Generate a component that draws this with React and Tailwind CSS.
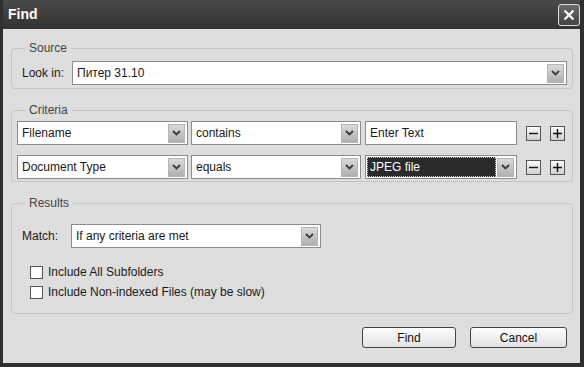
import React from "react";

function Arrow() {
  return (
    <div className="flex items-center justify-center w-[17px] h-[19px] border border-[#b4b4b4] bg-gradient-to-b from-[#dadada] to-[#b0b0b0]">
      <svg width="9" height="6" viewBox="0 0 9 6">
        <path d="M1 1 L4.5 4.5 L8 1" fill="none" stroke="#3a3a3a" strokeWidth="1.8" />
      </svg>
    </div>
  );
}

function Select({ value, className = "" }) {
  return (
    <div className={`flex items-center h-[24px] bg-white border border-[#8c8c8c] pl-[4px] pr-[2px] ${className}`}>
      <span className="flex-1 truncate text-[12px] text-[#1a1a1a]">{value}</span>
      <Arrow />
    </div>
  );
}

function SmallBtn({ sign }) {
  return (
    <div className="flex items-center justify-center w-[15px] h-[15px] border border-[#555] bg-gradient-to-b from-[#fafafa] to-[#d0d0d0]">
      <svg width="11" height="11" viewBox="0 0 11 11">
        <path d={sign === "+" ? "M1 5.5 H10 M5.5 1 V10" : "M1 5.5 H10"} stroke="#111" strokeWidth="1.4" />
      </svg>
    </div>
  );
}

function Group({ title, className = "", children }) {
  return (
    <fieldset className={`border border-[#c4c4c4] rounded-[4px] px-[5px] ${className}`}>
      <legend className="ml-[8px] px-[4px] text-[12px] text-[#444]">{title}</legend>
      {children}
    </fieldset>
  );
}

function Check({ label }) {
  return (
    <div className="flex items-center gap-[5px] h-[20px]">
      <div className="w-[13px] h-[13px] border border-[#555] bg-white" />
      <span className="text-[12px] text-[#1a1a1a]">{label}</span>
    </div>
  );
}

export default function App() {
  return (
    <div
      className="w-[584px] h-[367px] flex flex-col bg-[#2f2f2f] pl-[3px] pr-[4px] pb-[4px]"
      style={{ fontFamily: '"Liberation Sans", Arial, sans-serif' }}
    >
      <div className="h-[29px] flex items-center justify-between pl-[5px] bg-gradient-to-b from-[#4a4a4a] to-[#333]">
        <span className="text-white font-bold text-[14px]">Find</span>
        <div className="w-[22px] h-[22px] rounded-[3px] border border-[#ddd] bg-gradient-to-b from-[#6a6a6a] to-[#444] flex items-center justify-center">
          <svg width="12" height="12" viewBox="0 0 12 12">
            <path d="M1.5 1.5 L10.5 10.5 M10.5 1.5 L1.5 10.5" stroke="#fff" strokeWidth="2.2" />
          </svg>
        </div>
      </div>
      <div className="flex-1 bg-[#dedede] pl-[8px] pr-[7px] pt-[10px]">
        <Group title="Source" className="h-[50px]">
          <div className="flex items-center mt-[4px]">
            <span className="w-[50px] shrink-0 text-[12px] text-[#1a1a1a] ml-[5px]">Look in:</span>
            <Select value="Питер 31.10" className="flex-1" />
          </div>
        </Group>
        <Group title="Criteria" className="mt-[12px] pb-[2px] pt-[2px]">
          {[
            ["Filename", "contains"],
            ["Document Type", "equals"],
          ].map(([a, b], i) => (
            <div key={a} className={`flex items-center ${i ? "mt-[10px]" : ""}`}>
              <Select value={a} className="w-[171px]" />
              <Select value={b} className="w-[170px] ml-[3px]" />
              {i === 0 ? (
                <div className="w-[152px] h-[24px] ml-[4px] bg-white border border-[#8c8c8c] pl-[4px] flex items-center text-[12px] text-[#1a1a1a]">
                  Enter Text
                </div>
              ) : (
                <div className="w-[152px] h-[24px] ml-[4px] bg-white border border-[#8c8c8c] flex items-center p-[1px] pr-[2px]">
                  <div className="flex-1 h-full bg-[#2a2a2a] border border-dotted border-[#ccc] flex items-center pl-[2px] text-[12px] text-white mr-[1px]">
                    JPEG file
                  </div>
                  <Arrow />
                </div>
              )}
              <div className="ml-[9px]">
                <SmallBtn sign="-" />
              </div>
              <div className="ml-[9px]">
                <SmallBtn sign="+" />
              </div>
            </div>
          ))}
        </Group>
        <Group title="Results" className="mt-[12px] h-[120px]">
          <div className="flex items-center mt-[12px]">
            <span className="w-[49px] shrink-0 text-[12px] text-[#1a1a1a] ml-[5px]">Match:</span>
            <Select value="If any criteria are met" className="w-[250px]" />
          </div>
          <div className="mt-[14px] ml-[13px]">
            <Check label="Include All Subfolders" />
            <Check label="Include Non-indexed Files (may be slow)" />
          </div>
        </Group>
        <div className="flex justify-end gap-[14px] mt-[13px] pr-[6px]">
          <button className="w-[94px] h-[21px] rounded-[3px] border border-[#444] bg-gradient-to-b from-[#fdfdfd] to-[#e2e2e2] text-[12px] text-[#111]">
            Find
          </button>
          <button className="w-[97px] h-[21px] rounded-[3px] border border-[#444] bg-gradient-to-b from-[#fdfdfd] to-[#e2e2e2] text-[12px] text-[#111]">
            Cancel
          </button>
        </div>
      </div>
    </div>
  );
}
